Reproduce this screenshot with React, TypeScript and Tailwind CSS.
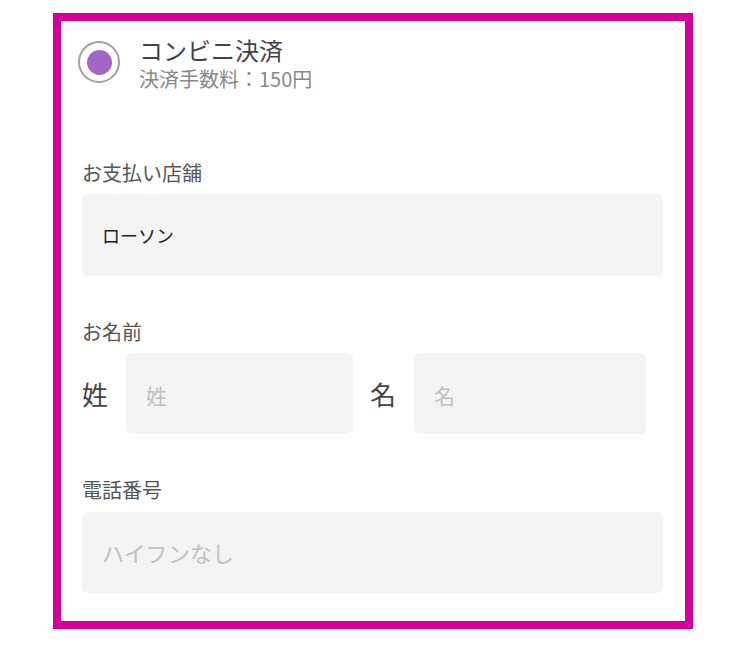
const FONT = {
  fontFamily: '"Noto Sans CJK JP", "Noto Sans", sans-serif',
}

function Field({ label, children }: { label: string; children: React.ReactNode }) {
  return (
    <div>
      <div className="h-6 text-[20px] leading-6 text-[#555]">{label}</div>
      {children}
    </div>
  )
}

export default function App() {
  return (
    <div className="min-h-[645px] bg-white pt-[13px] pl-[53px]" style={FONT}>
      <div className="box-border h-[616px] w-[640px] border-[8px] border-[#d4009b] bg-white">
        <div className="flex items-start pl-[17px] pt-[14px]">
          <div className="mt-[6px] grid size-[42px] shrink-0 place-items-center rounded-full border-2 border-[#a0a0a0]">
            <div className="size-[25px] rounded-full bg-[#a366c4]" />
          </div>
          <div className="ml-[19px]">
            <div className="h-[30px] text-[24px] leading-[30px] text-[#444]">コンビニ決済</div>
            <div className="mt-[2px] h-6 text-[20px] leading-6 text-[#888]">決済手数料：150円</div>
          </div>
        </div>

        <div className="px-[21px] pt-[70px]">
          <Field label="お支払い店舗">
            <div className="mt-[9px] flex h-[82px] w-[581px] items-center rounded-md bg-[#f4f4f4] pl-[20px] text-[18px] text-[#222]">
              ローソン
            </div>
          </Field>

          <div className="mt-[44px]">
            <Field label="お名前">
              <div className="mt-[9px] flex items-center">
                <span className="w-[26px] text-[26px] leading-none text-[#444]">姓</span>
                <div className="ml-[18px] flex h-[81px] w-[227px] items-center rounded-md bg-[#f4f4f4] pt-[4px] pl-[20px] text-[21px] text-[#c0c0c0]">
                  姓
                </div>
                <span className="ml-[17px] w-[26px] text-[26px] leading-none text-[#444]">名</span>
                <div className="ml-[18px] flex h-[81px] w-[232px] items-center rounded-md bg-[#f4f4f4] pt-[4px] pl-[20px] text-[21px] text-[#c0c0c0]">
                  名
                </div>
              </div>
            </Field>
          </div>

          <div className="mt-[44px]">
            <Field label="電話番号">
              <div className="mt-[10px] flex h-[81px] w-[581px] items-center rounded-md bg-[#f4f4f4] pl-[20px] text-[22px] text-[#c0c0c0]">
                ハイフンなし
              </div>
            </Field>
          </div>
        </div>
      </div>
    </div>
  )
}
